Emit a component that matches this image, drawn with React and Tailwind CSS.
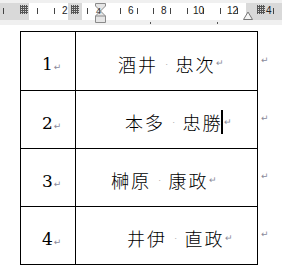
import React from 'react';

const rows = [
  { n: '1', a: '酒井', b: '忠次', pl: 'pl-[42px]', cursor: false },
  { n: '2', a: '本多', b: '忠勝', pl: 'pl-[49px]', cursor: true },
  { n: '3', a: '榊原', b: '康政', pl: 'pl-[35px]', cursor: false },
  { n: '4', a: '井伊', b: '直政', pl: 'pl-[51px]', cursor: false },
];

const ticks = [3, 37, 54, 87, 120, 137, 153, 170, 187, 203, 220, 237, 273];
const nums = [
  { x: 62, t: '2' },
  { x: 128, t: '6' },
  { x: 161, t: '8' },
  { x: 193, t: '10' },
  { x: 227, t: '12' },
  { x: 266, t: '4' },
];

const Ret = () => (
  <span className="text-[9px] text-[#8a8a9a] leading-none ml-[1px] align-baseline font-['DejaVu_Sans',sans-serif]">↵</span>
);

const Grid = ({ x }) => (
  <svg className="absolute top-[5px]" style={{ left: x }} width="8" height="9" viewBox="0 0 8 9">
    {[0, 2, 4, 6].map((i) => (
      <line key={'v' + i} x1={i + 0.5} y1="0" x2={i + 0.5} y2="9" stroke="#555" strokeWidth="1" />
    ))}
    {[1, 3, 5, 7].map((i) => (
      <line key={'h' + i} x1="0" y1={i + 0.5} x2="8" y2={i + 0.5} stroke="#555" strokeWidth="1" />
    ))}
  </svg>
);

const Ruler = () => (
  <div className="relative h-[25px] bg-[#f0f0f0] font-['Liberation_Sans',sans-serif]">
    {/* band */}
    <div className="absolute top-[3px] left-0 right-0 h-[17px] flex">
      <div className="w-[29px] bg-[#d9d9d9]" />
      <div className="w-[39px] bg-white" />
      <div className="w-[14px] bg-[#d9d9d9]" />
      <div className="w-[164px] bg-white" />
      <div className="flex-1 bg-[#d9d9d9]" />
    </div>
    {ticks.map((x) => (
      <div key={x} className="absolute top-[8px] w-[1px] h-[6px] bg-[#444]" style={{ left: x }} />
    ))}
    {nums.map((n) => (
      <span key={n.t + n.x} className="absolute top-[5px] text-[10px] leading-[12px] text-[#222]" style={{ left: n.x }}>
        {n.t}
      </span>
    ))}
    <Grid x={20} />
    <Grid x={71} />
    <Grid x={257} />
    {/* indent marker */}
    <svg className="absolute top-[3px] left-[95px]" width="11" height="20" viewBox="0 0 11 20">
      <path d="M0.5 0.5 H10.5 V3 L5.5 8 L10.5 13 V19.5 H0.5 V13 L5.5 8 L0.5 3 Z" fill="#e6e6e6" stroke="#8a8a8a" />
      <line x1="0.5" y1="13" x2="10.5" y2="13" stroke="#8a8a8a" />
      <text x="1" y="11" fontSize="9" fill="#333" fontFamily="Liberation Sans">4</text>
    </svg>
    {/* right indent marker */}
    <svg className="absolute top-[10px] left-[243px]" width="10" height="10" viewBox="0 0 10 10">
      <path d="M0.5 9.5 L5 2 L9.5 9.5 Z" fill="#f4f4f4" stroke="#777" />
    </svg>
    <div className="absolute top-[22px] left-[150px] w-[1px] h-[2px] bg-[#555]" />
    <div className="absolute top-[22px] left-[217px] w-[1px] h-[2px] bg-[#555]" />
  </div>
);

export default function App() {
  return (
    <div className="w-[282px] h-[277px] bg-white overflow-hidden">
      <Ruler />
      <div className="flex mt-[6px] ml-[20px]">
        <table className="border-collapse border border-black">
          <tbody>
            {rows.map((r, i) => (
              <tr key={r.n} className={i === 0 ? 'h-[59px]' : 'h-[58px]'}>
                <td className="w-[55px] border border-black p-0 align-middle">
                  <div className="pl-[21px] pt-[7px] font-['DejaVu_Serif',serif] text-[17px] text-black leading-none">
                    {r.n}
                    <Ret />
                  </div>
                </td>
                <td className="w-[182px] border border-black p-0 align-middle">
                  <div className={`${r.pl} pt-[5px] flex items-center font-['Noto_Sans_CJK_JP',sans-serif] font-light text-[18px] text-black leading-none`}>
                    <span className="tracking-[2px]">{r.a}</span>
                    <span className="text-[#aaa] text-[10px] mx-[6px]">·</span>
                    <span className="tracking-[2px]">{r.b}</span>
                    {r.cursor && <span className="inline-block w-[2px] h-[24px] bg-black -ml-[1px]" />}
                    <Ret />
                  </div>
                </td>
              </tr>
            ))}
          </tbody>
        </table>
        <div className="flex flex-col pl-[2px]">
          {rows.map((r, i) => (
            <div key={r.n} className={i === 0 ? 'h-[59px] pt-[14px]' : 'h-[58px] pt-[13px]'}>
              <Ret />
            </div>
          ))}
        </div>
      </div>
    </div>
  );
}
